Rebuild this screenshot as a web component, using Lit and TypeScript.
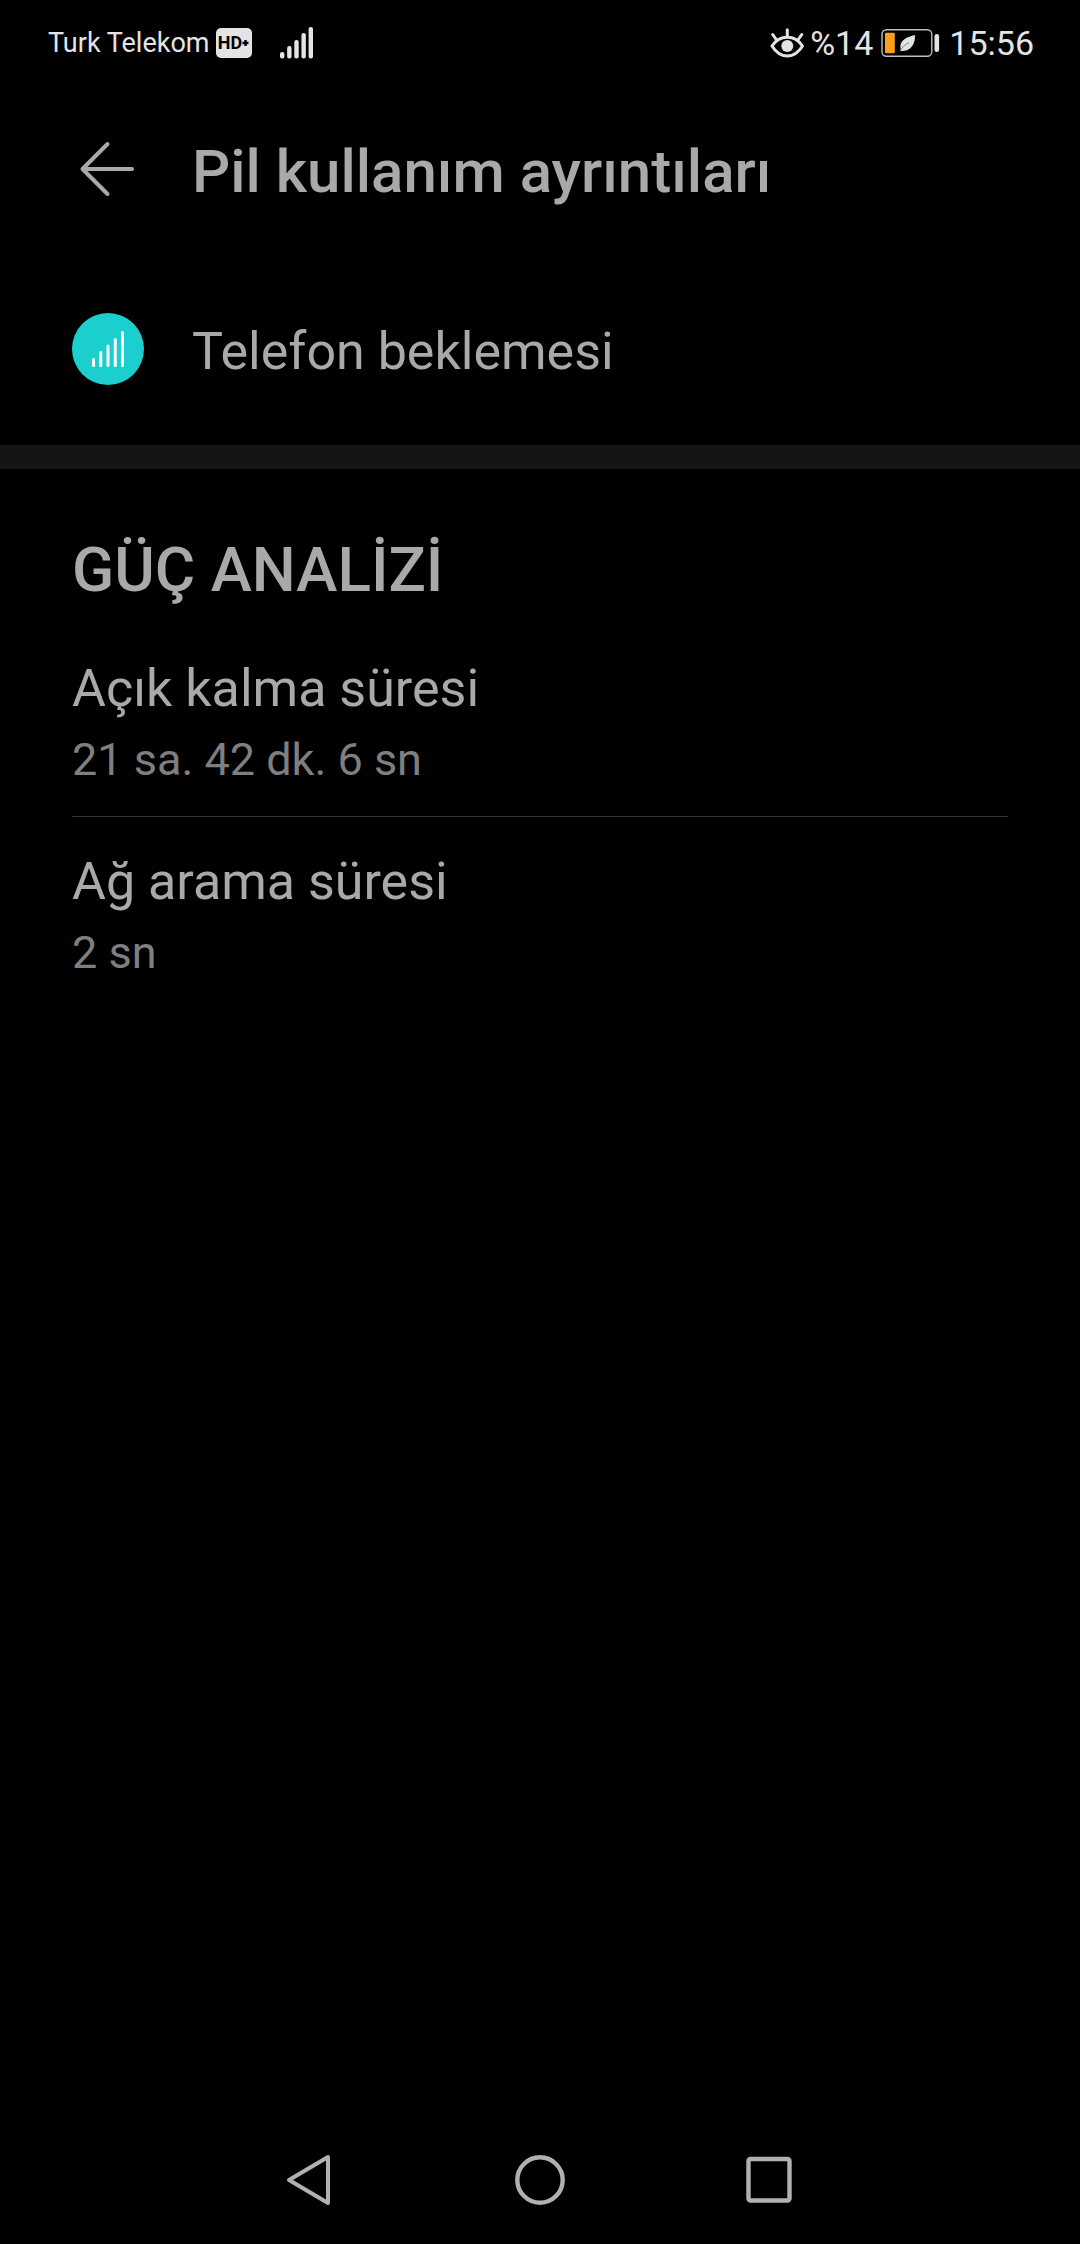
import { LitElement, html, css, svg } from "lit";
import { customElement, property } from "lit/decorators.js";

interface Metric {
  label: string;
  value: string;
}

const METRICS: Metric[] = [
  { label: "Açık kalma süresi", value: "21 sa. 42 dk. 6 sn" },
  { label: "Ağ arama süresi", value: "2 sn" },
];

@customElement("status-bar")
class StatusBar extends LitElement {
  @property() carrier = "";
  @property() battery = "";
  @property() time = "";

  static styles = css`
    :host {
      display: flex;
      justify-content: space-between;
      align-items: center;
      min-height: 86px;
      padding: 0 46px 0 48px;
      box-sizing: border-box;
      color: #e4e4e4;
      line-height: 40px;
    }
    .group {
      display: flex;
      align-items: center;
    }
    .carrier {
      font-size: 27px;
    }
    .badge {
      display: flex;
      align-items: center;
      justify-content: center;
      width: 36px;
      height: 30px;
      margin-left: 6px;
      border-radius: 5px;
      background: #e4e4e4;
      color: #000;
      font-size: 18px;
      font-weight: 700;
      line-height: 30px;
    }
    .signal {
      margin-left: 28px;
    }
    .level,
    .time {
      font-size: 34px;
    }
    .level {
      margin-left: 6px;
    }
    .battery {
      margin: 0 8px;
    }
    svg {
      display: block;
      flex: none;
    }
  `;

  render() {
    const bars = [25, 19, 13, 6, 0];
    return html`
      <div class="group">
        <span class="carrier">${this.carrier}</span>
        <span class="badge">HD<svg width="7" height="8" viewBox="0 0 7 8" aria-hidden="true">
          <path d="M3.5 1v6M.5 4h6" stroke="#000" stroke-width="2.4" />
        </svg></span>
        <svg class="signal" width="34" height="32" viewBox="0 0 34 32" fill="#e4e4e4" aria-hidden="true">
          ${bars.map((y, i) => svg`<rect x=${i * 7.15} y=${y} width="4.4" height=${31.5 - y} rx="2" />`)}
        </svg>
      </div>
      <div class="group">
        <svg width="34" height="31" viewBox="0 0 34 31" fill="none" stroke="#e4e4e4" stroke-width="3" stroke-linecap="round" aria-hidden="true">
          <path d="M2 18C6 12 11 9.300 17.300 9.300S28.500 12 32.500 18C28.500 24.500 23.500 28 17.300 28S6 24.500 2 18Z" stroke-linejoin="round" />
          <circle cx="17.300" cy="18" r="6" fill="#e4e4e4" stroke="none" />
          <path d="M17.300 1.800V8M2.700 6.500L6.200 11.500M31.800 6.500L28.300 11.500" />
        </svg>
        <span class="level">${this.battery}</span>
        <svg class="battery" width="60" height="28" viewBox="0 0 60 28" fill="none" aria-hidden="true">
          <rect x="1" y=".8" width="49.800" height="26.400" rx="4.500" stroke="#bdbdbd" stroke-width="1.400" />
          <rect x="4" y="3.700" width="9.800" height="20.600" rx="1" fill="#ff9d1e" />
          <rect x="53.500" y="5" width="4.600" height="18" rx="2.300" fill="#e4e4e4" />
          <path d="M34 6C26 8 20.500 10.500 19.500 16C19.200 18 19.500 20 20 22C27 22.500 34.500 18 34 6Z" fill="#e4e4e4" />
          <path d="M19 22.500C20.500 18.500 23.500 16 28 13.500" stroke="#777" stroke-width=".8" />
        </svg>
        <span class="time">${this.time}</span>
      </div>
    `;
  }
}

@customElement("nav-bar")
class NavBar extends LitElement {
  static styles = css`
    :host {
      display: flex;
      justify-content: center;
      min-height: 128px;
    }
    .key {
      display: flex;
      align-items: center;
      justify-content: center;
      width: 230px;
      padding: 0;
      border: 0;
      background: none;
      color: #b1b1b1;
    }
    svg {
      display: block;
    }
  `;

  render() {
    return html`
      <button class="key" aria-label="Geri">
        <svg width="52" height="52" viewBox="0 0 52 52" fill="none" stroke="currentColor" stroke-width="4" stroke-linejoin="round" aria-hidden="true">
          <path d="M44 3V49L5 26Z" />
        </svg>
      </button>
      <button class="key" aria-label="Ana ekran">
        <svg width="52" height="52" viewBox="0 0 52 52" fill="none" stroke="currentColor" stroke-width="4.400" aria-hidden="true">
          <circle cx="26" cy="26" r="22.700" />
        </svg>
      </button>
      <button class="key" aria-label="Son uygulamalar">
        <svg width="52" height="52" viewBox="0 0 52 52" fill="none" stroke="currentColor" stroke-width="4.400" aria-hidden="true">
          <rect x="4.500" y="5" width="41" height="41.500" rx="2" />
        </svg>
      </button>
    `;
  }
}

@customElement("app-root")
class AppRoot extends LitElement {
  static styles = css`
    :host {
      display: flex;
      flex-direction: column;
      min-height: 100vh;
      background: #000;
      color: #a9a9a9;
      font-family: Roboto, "Noto Sans", sans-serif;
    }
    .header,
    .app {
      display: flex;
      align-items: center;
      gap: 48px;
      padding: 0 72px;
    }
    .header {
      min-height: 166px;
    }
    .app {
      min-height: 193px;
    }
    .back {
      width: 72px;
      height: 72px;
      padding: 0;
      border: 0;
      background: none;
      color: inherit;
    }
    .icon {
      display: block;
      flex: none;
    }
    h1,
    h2,
    .name,
    .metrics,
    .label,
    .value {
      margin: 0;
    }
    h1,
    h2 {
      font-weight: 500;
      line-height: 72px;
    }
    h1 {
      font-size: 60px;
    }
    h2 {
      font-size: 62px;
    }
    .name,
    .label {
      font-size: 52px;
      line-height: 64px;
    }
    h1,
    .name {
      padding-top: 6px;
    }
    .analysis {
      padding: 65px 72px 0;
      border-top: 24px solid #151515;
    }
    .metrics {
      padding-top: 18px;
    }
    .metric {
      display: flex;
      flex-direction: column;
      gap: 11px;
      padding: 33px 0 28px;
    }
    .metric + .metric {
      border-top: 1px solid #333;
    }
    .value {
      color: #7f7f7f;
      font-size: 45px;
      line-height: 56px;
    }
    nav-bar {
      margin-top: auto;
    }
  `;

  render() {
    const bars = [27, 20, 13.5, 7, 0];
    return html`
      <status-bar carrier="Turk Telekom" battery="%14" time="15:56"></status-bar>
      <header class="header">
        <button class="back" aria-label="Geri">
          <svg class="icon" width="72" height="72" viewBox="0 0 72 72" fill="none" stroke="currentColor" stroke-width="4" stroke-linecap="round" stroke-linejoin="round" aria-hidden="true">
            <path d="M35.500 11L10.500 36L35.500 61M11 36H60" />
          </svg>
        </button>
        <h1>Pil kullanım ayrıntıları</h1>
      </header>
      <main>
        <div class="app">
          <svg class="icon" width="72" height="72" viewBox="0 0 72 72" aria-hidden="true">
            <circle cx="36" cy="36" r="36" fill="#1bcfcf" />
            ${bars.map((y, i) => svg`<rect x=${20 + i * 7.25} y=${18 + y} width="3" height=${36 - y} rx="1.500" fill="#fff" />`)}
          </svg>
          <p class="name">Telefon beklemesi</p>
        </div>
        <section class="analysis">
          <h2>GÜÇ ANALİZİ</h2>
          <dl class="metrics">
            ${METRICS.map(
              (m) => html`<div class="metric">
                <dt class="label">${m.label}</dt>
                <dd class="value">${m.value}</dd>
              </div>`
            )}
          </dl>
        </section>
      </main>
      <nav-bar></nav-bar>
    `;
  }
}
